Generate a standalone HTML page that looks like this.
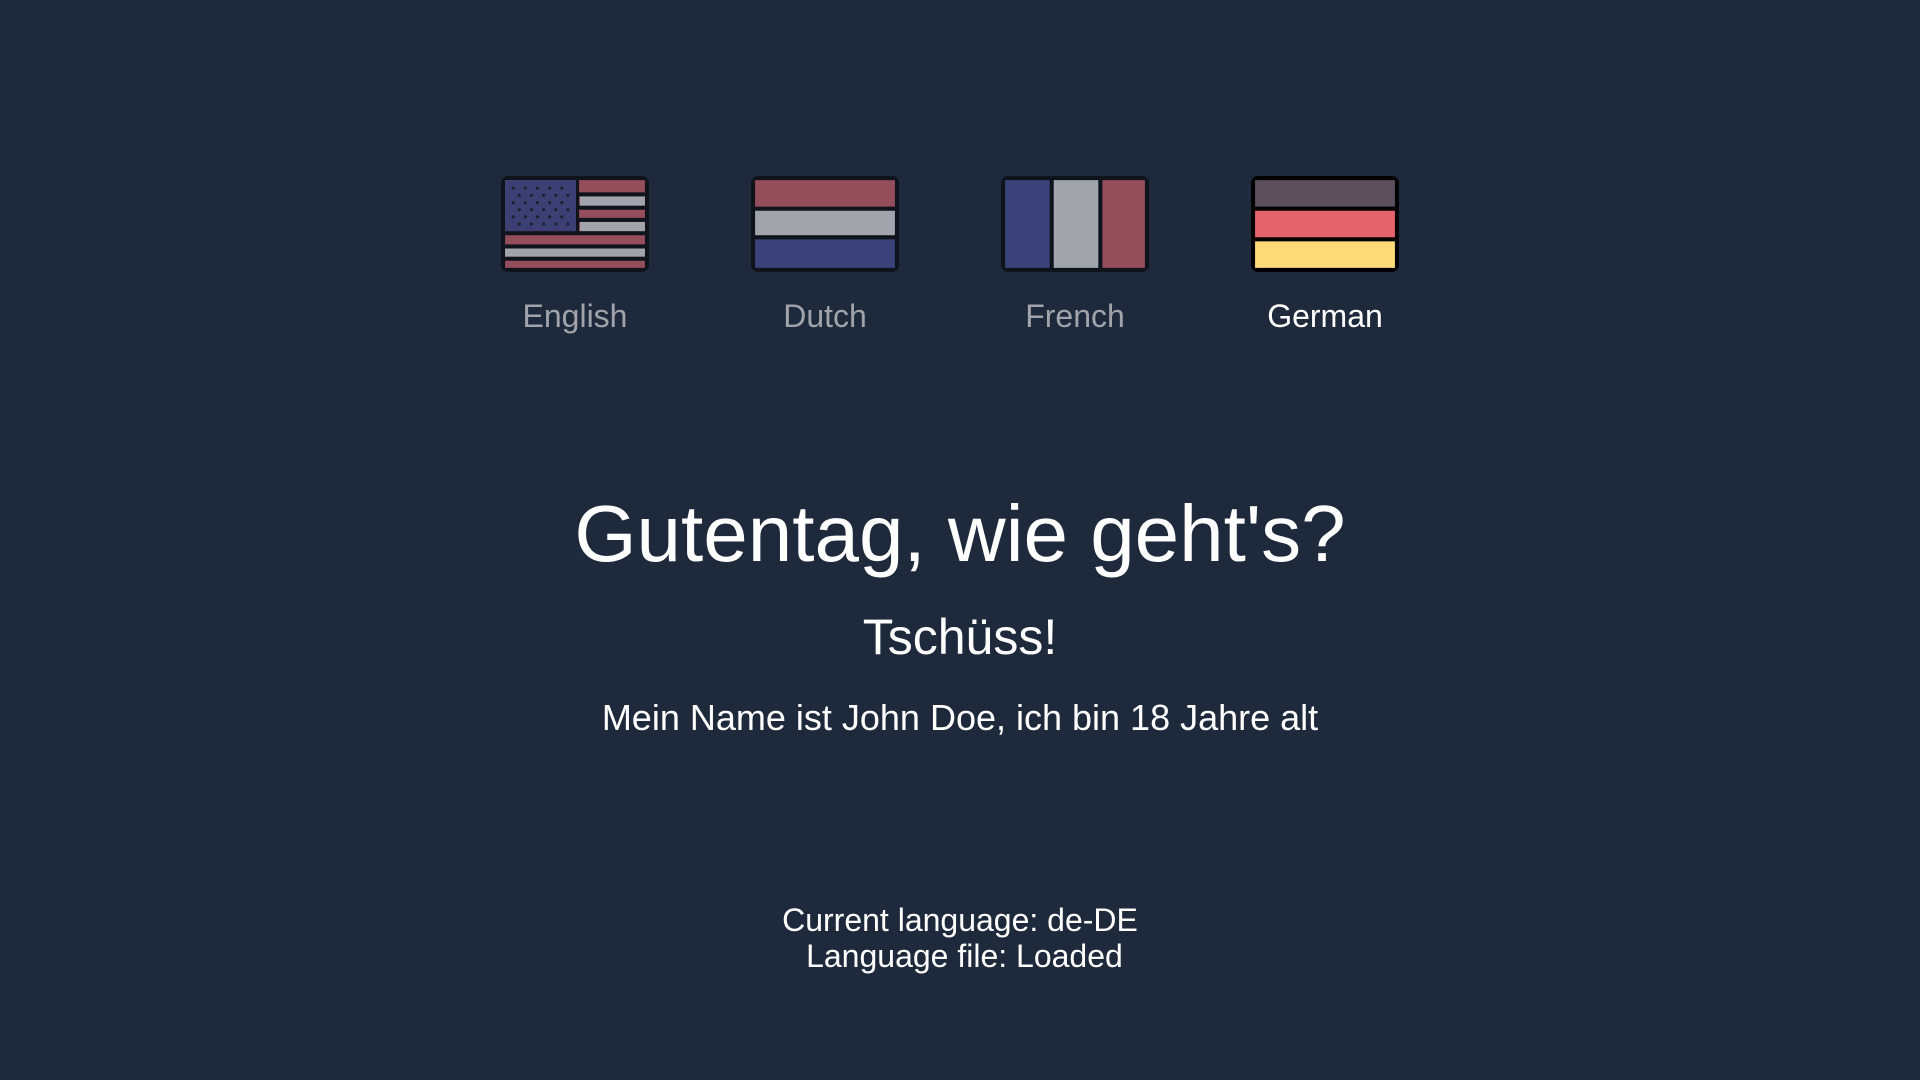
<!DOCTYPE html>
<html><head><meta charset="utf-8"><style>
html,body{margin:0;padding:0;width:1920px;height:1080px;background:#1e293b;overflow:hidden;font-family:"Liberation Sans",Arial,sans-serif;color:#fff}
.flag{position:absolute;top:174px;width:152px;text-align:center}
.flag svg{display:block}
.lbl{position:absolute;top:298px;width:150px;text-align:center;font-size:32px;color:#a0a3aa}
.c{position:absolute;left:0;width:1920px;text-align:center;white-space:pre}
</style></head><body>
<div class="flag" style="left:499px"><svg width="152" height="100" viewBox="0 0 150 98" preserveAspectRatio="none">
<rect x="2" y="2" width="146" height="94" rx="7" fill="#0f131c"/>
<rect x="6" y="6" width="138" height="86" fill="#934d5b"/>
<rect x="6" y="6" width="72" height="50" fill="#3b3f74"/>
<g fill="#0f131c"><rect x="78" y="18" width="66" height="4"/><rect x="78" y="31" width="66" height="4"/><rect x="78" y="43" width="66" height="4"/><rect x="6" y="56" width="138" height="4"/><rect x="6" y="69" width="138" height="4"/><rect x="6" y="81" width="138" height="4"/><rect x="76" y="6" width="3" height="50"/></g>
<g fill="#a1a4ab"><rect x="80" y="22" width="64" height="9"/><rect x="80" y="47" width="64" height="9"/><rect x="6" y="73" width="138" height="8"/></g>
<g fill="#1e2233"><circle cx="14" cy="14" r="1.6"/><circle cx="26" cy="14" r="1.6"/><circle cx="38" cy="14" r="1.6"/><circle cx="50" cy="14" r="1.6"/><circle cx="62" cy="14" r="1.6"/><circle cx="20" cy="21" r="1.6"/><circle cx="32" cy="21" r="1.6"/><circle cx="44" cy="21" r="1.6"/><circle cx="56" cy="21" r="1.6"/><circle cx="68" cy="21" r="1.6"/><circle cx="14" cy="28" r="1.6"/><circle cx="26" cy="28" r="1.6"/><circle cx="38" cy="28" r="1.6"/><circle cx="50" cy="28" r="1.6"/><circle cx="62" cy="28" r="1.6"/><circle cx="20" cy="35" r="1.6"/><circle cx="32" cy="35" r="1.6"/><circle cx="44" cy="35" r="1.6"/><circle cx="56" cy="35" r="1.6"/><circle cx="68" cy="35" r="1.6"/><circle cx="14" cy="42" r="1.6"/><circle cx="26" cy="42" r="1.6"/><circle cx="38" cy="42" r="1.6"/><circle cx="50" cy="42" r="1.6"/><circle cx="62" cy="42" r="1.6"/><circle cx="20" cy="49" r="1.6"/><circle cx="32" cy="49" r="1.6"/><circle cx="44" cy="49" r="1.6"/><circle cx="56" cy="49" r="1.6"/><circle cx="68" cy="49" r="1.6"/></g>
</svg></div>
<div class="lbl" style="left:500px">English</div>

<div class="flag" style="left:749px"><svg width="152" height="100" viewBox="0 0 150 98" preserveAspectRatio="none">
<rect x="2" y="2" width="146" height="94" rx="7" fill="#0f131c"/>
<rect x="6" y="6" width="138" height="26" fill="#934d5b"/>
<rect x="6" y="36" width="138" height="24" fill="#a1a4ab"/>
<rect x="6" y="64" width="138" height="28" fill="#3b4279"/>
</svg></div>
<div class="lbl" style="left:750px">Dutch</div>

<div class="flag" style="left:999px"><svg width="152" height="100" viewBox="0 0 150 98" preserveAspectRatio="none">
<rect x="2" y="2" width="146" height="94" rx="7" fill="#0f131c"/>
<rect x="6" y="6" width="44" height="86" fill="#3b4279"/>
<rect x="54" y="6" width="44" height="86" fill="#a1a4ab"/>
<rect x="102" y="6" width="42" height="86" fill="#934d5b"/>
</svg></div>
<div class="lbl" style="left:1000px">French</div>

<div class="flag" style="left:1249px"><svg width="152" height="100" viewBox="0 0 150 98" preserveAspectRatio="none">
<rect x="2" y="2" width="146" height="94" rx="7" fill="#000"/>
<rect x="6" y="6" width="138" height="26" fill="#5c4f5c"/>
<rect x="6" y="36" width="138" height="26" fill="#e5646c"/>
<rect x="6" y="66" width="138" height="26" fill="#fedb77"/>
</svg></div>
<div class="lbl" style="left:1250px;color:#fff">German</div>

<div class="c" style="top:488px;font-size:80px;line-height:92px">Gutentag, wie geht's?</div>
<div class="c" style="top:608px;font-size:50px;line-height:58px">Tschüss!</div>
<div class="c" style="top:696px;font-size:36px;line-height:44px">Mein Name ist John Doe, ich bin 18 Jahre alt</div>
<div class="c" style="top:902px;font-size:32px;line-height:36px">Current language: de-DE
 Language file: Loaded</div>
</body></html>
